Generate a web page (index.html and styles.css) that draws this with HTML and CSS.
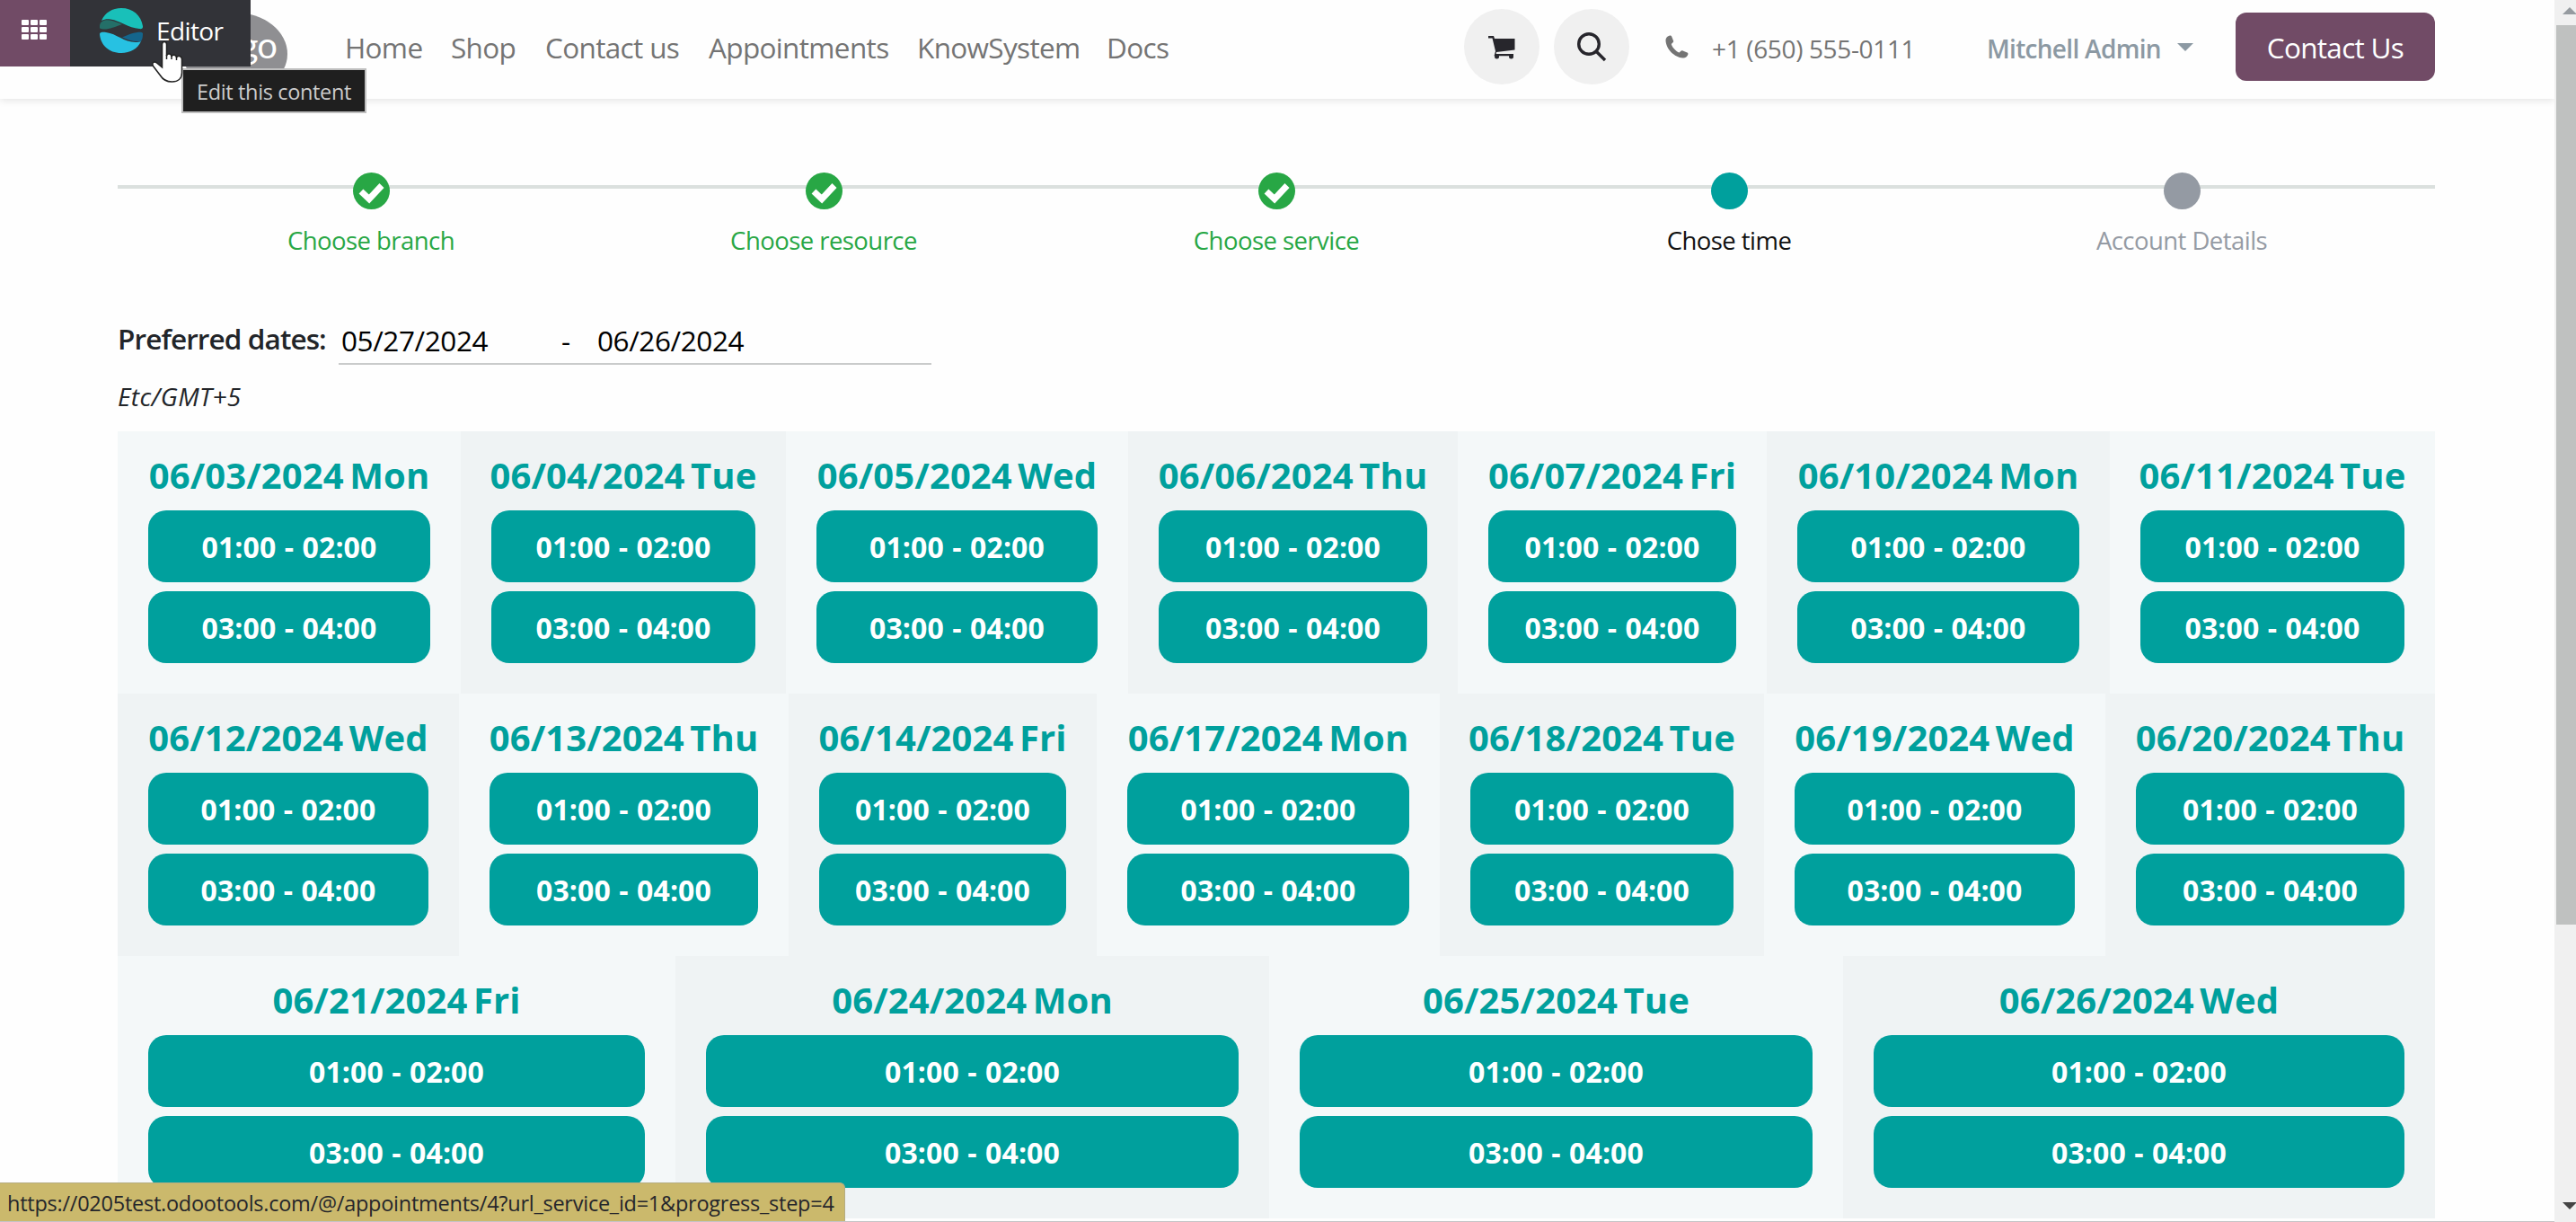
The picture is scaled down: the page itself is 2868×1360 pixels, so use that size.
FILE: index.html
```html
<!DOCTYPE html>
<html lang="en">
<head>
  <meta charset="UTF-8" />
  <meta name="viewport" content="width=device-width, initial-scale=1.0"/>
  <title>Appointments - Choose time</title>
  <link rel="stylesheet" href="styles.css">
</head>
<body>

<header class="site-header">
  <div class="brand"><span>go</span></div>
  <nav class="main-nav">
    <a>Home</a>
    <a>Shop</a>
    <a>Contact us</a>
    <a>Appointments</a>
    <a>KnowSystem</a>
    <a>Docs</a>
  </nav>
  <div class="header-tools">
    <button class="round-btn">
      <svg width="32" height="28" viewBox="0 0 32 28" fill="#27262c">
        <path d="M1 2h6l1 3h22.500v12.500L10 20l-.3 2H29v2.200H7.500L9 19 5.500 4.400H1z"/>
        <circle cx="10.500" cy="25" r="2.500"/>
        <circle cx="26.500" cy="25" r="2.500"/>
      </svg>
    </button>
    <button class="round-btn">
      <svg width="34" height="34" viewBox="0 0 34 34" fill="none" stroke="#27262c" stroke-width="3.400">
        <circle cx="14" cy="14" r="11.300"/>
        <path d="M22 22l10 10"/>
      </svg>
    </button>
    <svg class="phone-icon" width="26" height="26" viewBox="0 0 26 26" fill="#747474">
      <path d="M4.500.8C5.500.2 6.600.3 7 1.200l2 5c.4 1 .1 1.700-.7 2.400L6.800 10c1 3.800 4.800 8 8.900 9.600l1.700-1.800c.6-.7 1.400-.8 2.200-.4l4.800 2.200c.9.400 1.200 1.200.9 2.100-.9 2.600-3 4-5.700 3.800C10.300 25 .8 15.500.5 6 .4 3.500 2 1.700 4.500.8z"/>
    </svg>
    <span class="phone">+1 (650) 555-0111</span>
    <span class="user">Mitchell Admin</span>
    <span class="caret"></span>
    <a class="contact-btn">Contact Us</a>
  </div>
</header>

<main class="content">
  <ul class="steps">
    <li class="step done">
      <span class="dot"><svg width="41" height="41" viewBox="0 0 41 41"><path d="M9 21l9 8.500L32 14.500" fill="none" stroke="#fff" stroke-width="7"/></svg></span>
      Choose branch
    </li>
    <li class="step done">
      <span class="dot"><svg width="41" height="41" viewBox="0 0 41 41"><path d="M9 21l9 8.500L32 14.500" fill="none" stroke="#fff" stroke-width="7"/></svg></span>
      Choose resource
    </li>
    <li class="step done">
      <span class="dot"><svg width="41" height="41" viewBox="0 0 41 41"><path d="M9 21l9 8.500L32 14.500" fill="none" stroke="#fff" stroke-width="7"/></svg></span>
      Choose service
    </li>
    <li class="step active"><span class="dot"></span>Chose time</li>
    <li class="step"><span class="dot"></span>Account Details</li>
  </ul>

  <div class="dates">
    <label>Preferred dates:</label>
    <div class="date-range">
      <span class="date-from">05/27/2024</span>
      <span class="dash">-</span>
      <span>06/26/2024</span>
    </div>
  </div>
  <div class="timezone">Etc/GMT+5</div>

  <div class="week week-1">
    <div class="day"><h3>06/03/2024 Mon</h3><a class="slot">01:00 - 02:00</a><a class="slot">03:00 - 04:00</a></div>
    <div class="day alt"><h3>06/04/2024 Tue</h3><a class="slot">01:00 - 02:00</a><a class="slot">03:00 - 04:00</a></div>
    <div class="day"><h3>06/05/2024 Wed</h3><a class="slot">01:00 - 02:00</a><a class="slot">03:00 - 04:00</a></div>
    <div class="day alt"><h3>06/06/2024 Thu</h3><a class="slot">01:00 - 02:00</a><a class="slot">03:00 - 04:00</a></div>
    <div class="day"><h3>06/07/2024 Fri</h3><a class="slot">01:00 - 02:00</a><a class="slot">03:00 - 04:00</a></div>
    <div class="day alt"><h3>06/10/2024 Mon</h3><a class="slot">01:00 - 02:00</a><a class="slot">03:00 - 04:00</a></div>
    <div class="day"><h3>06/11/2024 Tue</h3><a class="slot">01:00 - 02:00</a><a class="slot">03:00 - 04:00</a></div>
  </div>
  <div class="week week-2">
    <div class="day alt"><h3>06/12/2024 Wed</h3><a class="slot">01:00 - 02:00</a><a class="slot">03:00 - 04:00</a></div>
    <div class="day"><h3>06/13/2024 Thu</h3><a class="slot">01:00 - 02:00</a><a class="slot">03:00 - 04:00</a></div>
    <div class="day alt"><h3>06/14/2024 Fri</h3><a class="slot">01:00 - 02:00</a><a class="slot">03:00 - 04:00</a></div>
    <div class="day"><h3>06/17/2024 Mon</h3><a class="slot">01:00 - 02:00</a><a class="slot">03:00 - 04:00</a></div>
    <div class="day alt"><h3>06/18/2024 Tue</h3><a class="slot">01:00 - 02:00</a><a class="slot">03:00 - 04:00</a></div>
    <div class="day"><h3>06/19/2024 Wed</h3><a class="slot">01:00 - 02:00</a><a class="slot">03:00 - 04:00</a></div>
    <div class="day alt"><h3>06/20/2024 Thu</h3><a class="slot">01:00 - 02:00</a><a class="slot">03:00 - 04:00</a></div>
  </div>
  <div class="week week-3">
    <div class="day"><h3>06/21/2024 Fri</h3><a class="slot">01:00 - 02:00</a><a class="slot">03:00 - 04:00</a></div>
    <div class="day alt"><h3>06/24/2024 Mon</h3><a class="slot">01:00 - 02:00</a><a class="slot">03:00 - 04:00</a></div>
    <div class="day"><h3>06/25/2024 Tue</h3><a class="slot">01:00 - 02:00</a><a class="slot">03:00 - 04:00</a></div>
    <div class="day alt"><h3>06/26/2024 Wed</h3><a class="slot">01:00 - 02:00</a><a class="slot">03:00 - 04:00</a></div>
  </div>
</main>

<!-- Backend editor bar -->
<div class="editor-bar">
  <div class="apps">
    <i></i><i></i><i></i><i></i><i></i><i></i><i></i><i></i><i></i>
  </div>
  <div class="editor">
    <svg width="48" height="50" viewBox="0 0 48 50">
      <path d="M0 22C-1 13 8 12 14 14c4 1 8 3 11 4-8 3-15 6-21 5.500C2 23.300.5 23 0 22z" fill="#246f68"/>
      <path d="M2 14C6 5 14 0 24 0c13 0 22 8 24 20 .3 2.500-1 3.500-4 3C32 22 23 14 12 12.500 8 12 5 12.500 2 14z" fill="#19c0b9"/>
      <path d="M48 29c.5-2-3-2.500-6-2-6 .5-11 3-17 5.500 6 3 13 5.500 21 4.500 1.500-2 2-5 2-8z" fill="#14658c"/>
      <path d="M0 29c-.2-2 3-2.500 7-2 12 1.500 20 11 33 11 2.500 0 4.500-.3 6-1-3.500 8-12 13-22 13C10 50 1 41 0 29z" fill="#27c1e2"/>
    </svg>
    <span>Editor</span>
  </div>
</div>
<div class="tooltip">Edit this content</div>
<svg class="cursor" width="36" height="48" viewBox="0 0 36 48">
  <path d="M11.500 30V4.500c0-4 5-4 5 0V17c1-3 5.500-2.500 5.500 1 1-3 5.500-2 5.500 1 1-2.500 6-2 6 2v15c0 6-4 10-11 10-6 0-10-2-13-7L1.500 28.500c-2-4 1.500-5.500 4-3.500z" fill="#fff" stroke="#222" stroke-width="1.500"/>
  <path d="M16.500 16v5M22 17v4M27.500 18v4" stroke="#222" stroke-width="1.500"/>
</svg>

<div class="scrollbar">
  <span class="arrow up"></span>
  <div class="thumb"></div>
  <span class="arrow down"></span>
</div>
<div class="status-bar">https://0205test.odootools.com/@/appointments/4?url_service_id=1&amp;progress_step=4</div>
<div class="bottom-edge"></div>

</body>
</html>
```
FILE: styles.css
```css
* {
  box-sizing: border-box;
}

body {
  margin: 0;
  height: 1360px;
  overflow: hidden;
  position: relative;
  background: #fefefe;
  font-family: "Open Sans", "Noto Sans", sans-serif;
  color: #222529;
}

/* Header */
.site-header {
  display: flex;
  align-items: center;
  width: 2844px;
  height: 110px;
  padding: 0 133px 6px 204px;
  background: #fefefe;
  box-shadow: 0 2px 8px rgba(0,0,0,0.1);
}

.brand {
  width: 116px;
  height: 92px;
  margin-top: 16px;
  padding: 11px 12px 0 0;
  border-radius: 50%;
  background: #8f8f92;
  color: #fff;
  font-family: Lato, sans-serif;
  font-size: 40px;
  line-height: 50px;
  letter-spacing: -1px;
  text-align: right;
}

.main-nav {
  display: grid;
  grid-template-columns: 118px 105px 182px 232px 211px auto;
  margin-left: 64px;
  padding-top: 2px;
  font-size: 31.500px;
  line-height: 44px;
  letter-spacing: -0.65px;
  color: #747474;
  white-space: nowrap;
}

.header-tools {
  display: flex;
  align-items: center;
  margin-left: auto;
  white-space: nowrap;
}

.round-btn {
  display: flex;
  align-items: center;
  justify-content: center;
  width: 84px;
  height: 84px;
  margin-right: 16px;
  padding: 0;
  border: none;
  border-radius: 50%;
  background: #f0f0f0;
}

.phone-icon {
  margin: 0 26px 0 24px;
}

.phone {
  width: 306px;
  font-size: 28px;
  line-height: 40px;
  letter-spacing: -0.35px;
  color: #747474;
  padding-top: 4px;
}

.user {
  width: 212px;
  font-size: 28px;
  line-height: 40px;
  font-weight: 600;
  letter-spacing: -0.7px;
  color: #8c99a3;
  padding-top: 4px;
}

.caret {
  border: 9px solid transparent;
  border-top-color: #8c99a3;
  border-bottom: none;
  margin-right: 47px;
}

.contact-btn {
  width: 222px;
  height: 76px;
  border-radius: 12px;
  background: #714b66;
  color: #fff;
  font-size: 31.500px;
  font-weight: 500;
  line-height: 78px;
  letter-spacing: -0.7px;
  text-align: center;
}

/* Booking steps */
.content {
  width: 2580px;
  margin-left: 131px;
}

.steps {
  display: flex;
  position: relative;
  height: 236px;
  margin: 0;
  padding: 82px 30px 0;
  list-style: none;
}

.steps::before {
  content: "";
  position: absolute;
  left: 0;
  right: 0;
  top: 96px;
  height: 4px;
  background: #dbe0de;
}

.step {
  position: relative;
  flex: 1;
  display: flex;
  flex-direction: column;
  align-items: center;
  gap: 15px;
  font-size: 27.500px;
  line-height: 40px;
  letter-spacing: -0.55px;
  color: #959ba4;
}

.dot {
  width: 41px;
  height: 41px;
  border-radius: 50%;
  background: #949aa3;
}

.dot svg {
  display: block;
}

.done {
  color: #28a745;
}

.done .dot {
  background: #28a745;
}

.active {
  color: #111;
}

.active .dot {
  background: #00a09d;
}

/* Date filter */
.dates {
  display: flex;
  height: 60px;
  font-size: 31.500px;
}

.dates label {
  width: 246px;
  line-height: 61px;
  font-weight: 600;
  letter-spacing: -0.9px;
  white-space: nowrap;
}

.date-range {
  display: flex;
  width: 660px;
  padding-left: 3px;
  border-bottom: 2px solid #c9cbcb;
  color: #000;
  line-height: 65px;
  letter-spacing: -0.4px;
}

.date-from {
  width: 245px;
}

.dash {
  width: 40px;
}

.timezone {
  height: 74px;
  padding-top: 15px;
  font-size: 28px;
  line-height: 40px;
  font-style: italic;
  letter-spacing: 0.4px;
}

/* Time slots */
.week {
  display: grid;
  height: 292px;
}

.week-1 {
  grid-template-columns: 382px 362px 381px 367px 344px 382px 362px;
}

.week-2 {
  grid-template-columns: 380px 367px 343px 382px 361px 380px 367px;
}

.week-3 {
  grid-template-columns: 621px 661px 639px 659px;
}

.day {
  display: flex;
  flex-direction: column;
  gap: 10px;
  padding: 25px 34px 0;
  background: #f4f8f9;
}

.day.alt {
  background: #eff3f4;
}

.day h3 {
  margin: 0 -10px 5px;
  color: #00a09d;
  font-size: 40px;
  font-weight: 700;
  line-height: 48px;
  letter-spacing: 0.1px;
  word-spacing: -4px;
  text-align: center;
  white-space: nowrap;
}

.slot {
  height: 80px;
  border-radius: 20px;
  background: #00a09d;
  color: #fff;
  font-size: 32px;
  font-weight: 700;
  line-height: 81px;
  letter-spacing: 0.1px;
  word-spacing: 1px;
  text-align: center;
}

/* Editor bar */
.editor-bar {
  position: absolute;
  left: 0;
  top: 0;
  display: flex;
  height: 74px;
}

.apps {
  display: grid;
  grid-template-columns: repeat(3, 8px);
  grid-auto-rows: 6px;
  gap: 2px;
  width: 78px;
  padding: 22px 0 0 24px;
  background: #714b66;
}

.apps i {
  border-radius: 1px;
  background: #fff;
}

.editor {
  display: flex;
  align-items: flex-start;
  gap: 15px;
  width: 201px;
  padding: 9px 0 0 33px;
  background: #323338;
  color: #fff;
  font-size: 28px;
  letter-spacing: -0.6px;
}

.editor span {
  line-height: 51px;
}

.tooltip {
  position: absolute;
  left: 202px;
  top: 76px;
  width: 206px;
  height: 50px;
  border: 2px solid #bfbfbf;
  background: #1f1f1f;
  color: #cccccc;
  font-size: 23.500px;
  line-height: 48px;
  letter-spacing: -0.35px;
  text-align: center;
  white-space: nowrap;
}

.cursor {
  position: absolute;
  left: 169px;
  top: 45px;
}

/* Browser chrome */
.scrollbar {
  position: absolute;
  right: 0;
  top: 0;
  width: 24px;
  height: 1360px;
  padding: 28px 0 0 2px;
  overflow: hidden;
  background: #f0f0f0;
}

.thumb {
  height: 1001px;
  background: #bfc1c0;
}

.arrow {
  position: absolute;
  left: 9px;
  border: 8px solid transparent;
}

.arrow.up {
  top: 8px;
  border-top: none;
  border-bottom-color: #969ba0;
}

.arrow.down {
  top: 1338px;
  border-bottom: none;
  border-top-color: #444;
}

.status-bar {
  position: absolute;
  left: 0;
  top: 1316px;
  width: 941px;
  height: 43px;
  padding-left: 8px;
  border-top: 1px solid #b5ad83;
  border-right: 1px solid #b5ad83;
  border-top-right-radius: 6px;
  background: #cbb96c;
  color: #25262b;
  font-size: 23.500px;
  line-height: 45px;
  letter-spacing: -0.25px;
  white-space: nowrap;
}

.bottom-edge {
  position: absolute;
  left: 0;
  top: 1359px;
  width: 2844px;
  height: 1px;
  background: #c6c4c6;
}
```
